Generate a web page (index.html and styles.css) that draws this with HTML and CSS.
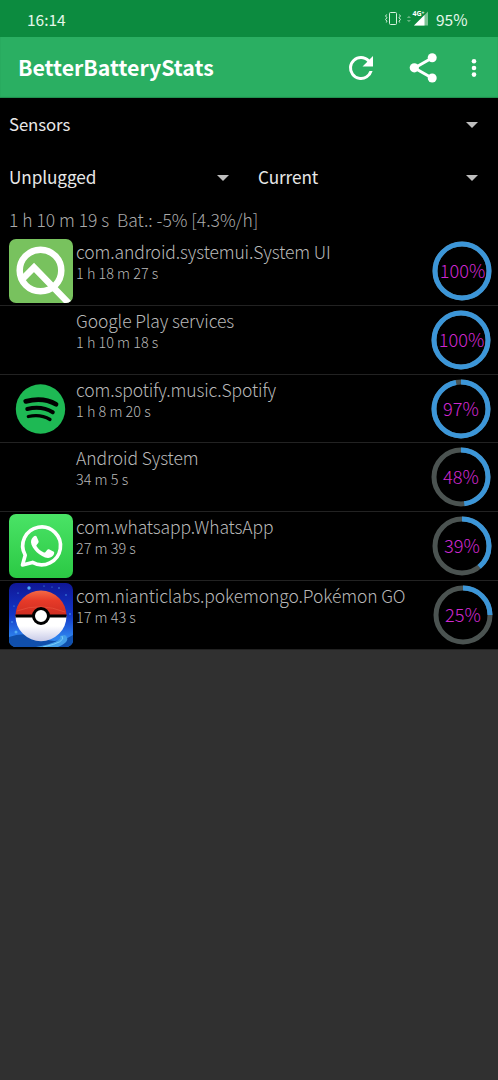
FILE: index.html
```html
<!DOCTYPE html>
<html lang="en">
<head>
<meta charset="utf-8">
<title>BetterBatteryStats</title>
<link rel="stylesheet" href="styles.css">
</head>
<body>
<header class="status">
  <span class="clock">16:14</span>
  <svg class="status-icons" width="48" height="20" viewBox="0 0 48 20">
    <g fill="none" stroke="#d9f3e0" stroke-width="1">
      <rect x="5.500" y="3.500" width="7" height="12" rx="1"/>
      <path d="M2.600 5.500l-1 1.500 1.300 1.700-1.300 1.800 1.300 1.700-.6 1.300M15.400 5.500l1 1.500-1.300 1.700 1.300 1.800-1.300 1.700.6 1.300"/>
    </g>
    <path d="M22.800 9l2.100-2.300L27 9zM22.800 11l2.100 2.300L27 11z" fill="#65b581"/>
    <path d="M30 16.500L44 2.500v14z" fill="#7cc394"/>
    <path d="M30 16.500L40.500 6v10.500z" fill="#fff"/>
    <text x="28.500" y="7" class="network">4G<tspan class="plus" dy="-1.500">+</tspan></text>
  </svg>
  <span class="battery">95%</span>
</header>
<div class="appbar">
  <h1 class="title">BetterBatteryStats</h1>
  <svg class="refresh" width="36" height="36" viewBox="0 0 24 24"><path fill="#fff" d="M17.650 6.350A7.960 7.960 0 0 0 12 4a8 8 0 1 0 7.730 10h-2.080A6 6 0 1 1 12 6c1.660 0 3.140.69 4.220 1.780L13 11h7V4z"/></svg>
  <svg class="share" width="34" height="34" viewBox="0 0 34 34"><path d="M26 7L8.500 17 26 27" fill="none" stroke="#fff" stroke-width="3"/><g fill="#fff"><circle cx="26.200" cy="6.700" r="4.500"/><circle cx="8.300" cy="16.800" r="4.600"/><circle cx="26.200" cy="27" r="4.500"/></g></svg>
  <svg class="more" width="6" height="20" viewBox="0 0 6 20" fill="#fff"><circle cx="3" cy="3.200" r="2.300"/><circle cx="3" cy="10" r="2.300"/><circle cx="3" cy="16.600" r="2.300"/></svg>
</div>
<main class="content">
  <div class="select"><span class="sensors">Sensors</span><i class="caret"></i></div>
  <div class="pair">
    <div class="select"><span class="unplugged">Unplugged</span><i class="caret"></i></div>
    <div class="select"><span class="current">Current</span><i class="caret"></i></div>
  </div>
  <p class="summary">1 h 10 m 19 s&nbsp; Bat.: -5% [4.3%/h]</p>
  <ul class="list">
    <li class="row systemui">
      <svg class="icon" viewBox="0 0 64 64">
        <clipPath id="tile"><rect width="64" height="64" rx="7"/></clipPath>
        <g clip-path="url(#tile)"><rect width="64" height="64" fill="#78c25e"/>
        <g fill="none" stroke="#fff" stroke-width="6.500"><circle cx="31.500" cy="31.500" r="20.800"/><path d="M14 39.500L25 28.500 60 64.500"/></g></g>
      </svg>
      <div class="text"><div class="name">com.android.systemui.System UI</div><div class="time">1 h 18 m 27 s</div></div>
      <svg class="ring" viewBox="0 0 60 60"><circle class="track" cx="30" cy="30" r="27"/><circle class="arc" cx="30" cy="30" r="27" pathLength="100" stroke-dasharray="100 0"/><text class="percent" x="30.500" y="36.500">100%</text></svg>
    </li>
    <li class="row play">
      <div class="icon"></div>
      <div class="text"><div class="name">Google Play services</div><div class="time">1 h 10 m 18 s</div></div>
      <svg class="ring" viewBox="0 0 60 60"><circle class="track" cx="30" cy="30" r="27"/><circle class="arc" cx="30" cy="30" r="27" pathLength="100" stroke-dasharray="100 0"/><text class="percent" x="30.500" y="36.500">100%</text></svg>
    </li>
    <li class="row spotify">
      <svg class="icon" viewBox="0 0 64 64"><circle cx="31.500" cy="32" r="24.700" fill="#1eb954"/><g fill="none" stroke="#000" stroke-linecap="round"><path d="M16.800 24.300Q34.500 20 47 27.300" stroke-width="4.800"/><path d="M18.300 32Q32.500 28.500 43.800 35.300" stroke-width="4"/><path d="M19.300 39.500Q31.500 36.700 41 42.500" stroke-width="3.300"/></g></svg>
      <div class="text"><div class="name">com.spotify.music.Spotify</div><div class="time">1 h 8 m 20 s</div></div>
      <svg class="ring" viewBox="0 0 60 60"><circle class="track" cx="30" cy="30" r="27"/><circle class="arc" cx="30" cy="30" r="27" pathLength="100" stroke-dasharray="97 3"/><text class="percent" x="30" y="36.500">97%</text></svg>
    </li>
    <li class="row system">
      <div class="icon"></div>
      <div class="text"><div class="name">Android System</div><div class="time">34 m 5 s</div></div>
      <svg class="ring" viewBox="0 0 60 60"><circle class="track" cx="30" cy="30" r="27"/><circle class="arc" cx="30" cy="30" r="27" pathLength="100" stroke-dasharray="48 52"/><text class="percent" x="30" y="36.500">48%</text></svg>
    </li>
    <li class="row whatsapp">
      <svg class="icon" viewBox="0 0 64 64">
        <defs><linearGradient id="green" x2="0" y2="1"><stop stop-color="#4ae366"/><stop offset="1" stop-color="#2bc944"/></linearGradient></defs>
        <rect width="64" height="64" rx="7" fill="url(#green)"/>
        <path d="M13.500 51l2.700-9.800A18.900 18.900 0 1 1 23.500 48.400z" fill="none" stroke="#fff" stroke-width="3.600" stroke-linejoin="round"/>
        <path d="M25 22.200c.8-.8 2.100-.7 2.600.3l1.900 4.500c.3.700.1 1.300-.3 1.900l-1.600 2c-.4.500-.3.900 0 1.400 1.800 2.900 4.100 4.900 7.300 6.200.6.200 1 .2 1.400-.3l2-2.500c.5-.6 1-.7 1.700-.4l4.300 2.100c.9.500 1 .8.900 1.700-.3 3-3.300 5-6.200 4.900-7.800-.9-16.500-9.300-17-15.800-.1-2.500 1.200-4.600 3-6z" fill="#fff"/>
      </svg>
      <div class="text"><div class="name">com.whatsapp.WhatsApp</div><div class="time">27 m 39 s</div></div>
      <svg class="ring" viewBox="0 0 60 60"><circle class="track" cx="30" cy="30" r="27"/><circle class="arc" cx="30" cy="30" r="27" pathLength="100" stroke-dasharray="39 61"/><text class="percent" x="30" y="36.500">39%</text></svg>
    </li>
    <li class="row pokemon">
      <svg class="icon" viewBox="0 0 64 64">
        <defs>
          <linearGradient id="sky" x2="0" y2="1"><stop stop-color="#101796"/><stop offset=".5" stop-color="#1237c8"/><stop offset=".85" stop-color="#2e83ee"/></linearGradient>
          <linearGradient id="red" x2="0" y2="1"><stop stop-color="#f36a45"/><stop offset=".4" stop-color="#e63a28"/><stop offset="1" stop-color="#cd2d22"/></linearGradient>
          <linearGradient id="white" x2="0" y2="1"><stop offset=".4" stop-color="#fff"/><stop offset="1" stop-color="#c9cbe8"/></linearGradient>
        </defs>
        <g clip-path="url(#tile)">
          <rect width="64" height="64" fill="url(#sky)"/>
          <g fill="#50a9f4"><circle cx="20" cy="5" r="1.700"/><circle cx="7" cy="49" r="1.500"/><circle cx="3" cy="39" r=".8"/><circle cx="50" cy="5" r=".7"/><circle cx="57" cy="12" r=".7"/><circle cx="35" cy="3" r=".6"/><circle cx="9" cy="10" r=".6"/><circle cx="61" cy="31" r=".8"/><circle cx="5" cy="23" r=".6"/><circle cx="43" cy="4" r=".5"/></g>
          <path d="M0 54Q16 48 32 55T64 52V64H0z" fill="#104fac"/>
          <path d="M27 64Q54 59 51 53L56 52Q63 58 49 64z" fill="#439ee9"/>
          <path d="M34 64Q58 59 53 53" fill="none" stroke="#78cdf8" stroke-width="1"/>
          <path d="M6.500 33a25.500 25.500 0 0 1 51 0z" fill="url(#red)"/>
          <path d="M6.500 33a25.500 25.200 0 0 0 51 0z" fill="url(#white)"/>
          <path d="M8 28Q31 19 56 29" fill="none" stroke="#ef6048" stroke-width="1" opacity=".5"/>
          <path d="M6.500 33h51" stroke="#000" stroke-width="3"/>
          <circle cx="32" cy="33" r="7.500" fill="#fff" stroke="#000" stroke-width="3"/>
        </g>
      </svg>
      <div class="text"><div class="name">com.nianticlabs.pokemongo.Pokémon GO</div><div class="time">17 m 43 s</div></div>
      <svg class="ring" viewBox="0 0 60 60"><circle class="track" cx="30" cy="30" r="27"/><circle class="arc" cx="30" cy="30" r="27" pathLength="100" stroke-dasharray="25 75"/><text class="percent" x="30" y="36.500">25%</text></svg>
    </li>
  </ul>
</main>
</body>
</html>
```
FILE: styles.css
```css
* { box-sizing: border-box; }
body { margin: 0; min-height: 1080px; background: #303030; font-family: "Noto Sans CJK JP", "Noto Sans", sans-serif; font-size: 17.2px; color: #e8e8e8; }
svg { display: block; flex: none; }
.status { display: flex; height: 37px; background: #0c8b3f; align-items: center; padding: 0 31px 0 27px; color: #e5f7ea; font-size: 15.5px; }
.clock { flex: 1; }
.status-icons { margin-right: 4px; }
.network { font-family: "Noto Sans", sans-serif; font-size: 7px; font-weight: 700; fill: #fff; stroke: #0c8b3f; stroke-width: 1px; paint-order: stroke; }
.plus { font-size: 5px; }
.battery { width: 31px; white-space: nowrap; }
.appbar { display: flex; align-items: center; height: 61px; background: #2aaf62; padding-left: 18px; box-shadow: inset 0 -1px 1px #208d4d; }
.title { flex: 1; margin: -2px 0 0; color: #fff; font-size: 21.3px; font-weight: 700; line-height: 30px; }
.share { margin-left: 27px; }
.more { margin: 0 21px 0 31px; }
.content { background: #000; height: 551px; }
.select { display: flex; align-items: center; height: 54px; padding: 0 20px 0 9px; }
.select span { flex: 1; margin-top: -2px; letter-spacing: -.1px; }
.sensors { font-size: 16.8px; }
.caret { width: 0; border: 6px solid transparent; border-top: 6px solid #bebebe; border-bottom: 0; }
.pair { display: grid; grid-template-columns: 1fr 1fr; }
.pair .select { height: 51px; }
.summary { margin: 0; padding: 4px 0 0 9px; height: 34px; line-height: 26px; color: #aaa; font-size: 17.5px; font-weight: 300; white-space: pre; }
.list { margin: 0; padding: 0; list-style: none; }
.row { display: flex; height: 68.8px; padding: 3px 6px 0 9px; border-bottom: 1px solid #222; }
.icon { width: 64px; height: 64px; margin-top: -1px; }
.text { flex: 1; padding-left: 3px; color: #b8b8b8; font-weight: 300; white-space: nowrap; }
.name { line-height: 23px; font-size: 17.5px; letter-spacing: -.12px; }
.time { font-size: 14.4px; line-height: 19px; }
.ring { width: 60px; height: 60px; margin-top: 1px; }
.play .ring, .spotify .ring, .system .ring { margin-right: 1px; }
.pokemon .ring { margin-right: -1px; }
.track, .arc { fill: none; stroke-width: 5px; }
.track { stroke: #4b5351; }
.arc { stroke: #3c96d8; transform: rotate(-90deg); transform-origin: 30px 30px; }
.percent { fill: #cf28cf; font-size: 18.200px; font-weight: 300; text-anchor: middle; }
```
